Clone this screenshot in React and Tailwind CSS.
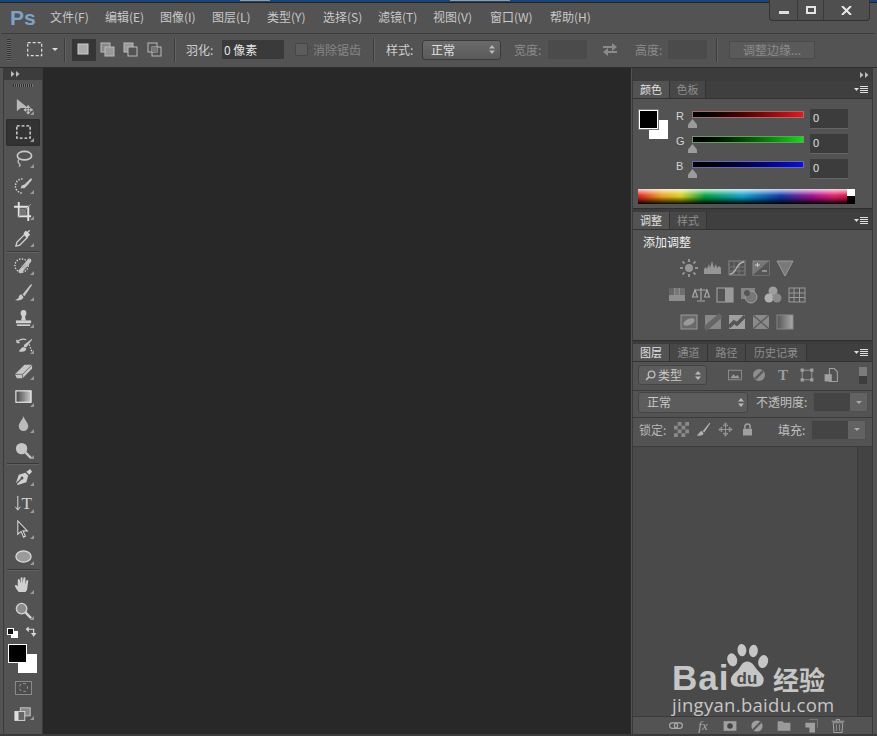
const Ico = ({ s = 20, children, vb = 20 }) => (
  <svg width={s} height={s} viewBox={`0 0 ${vb} ${vb}`} fill="none" stroke="none">{children}</svg>
);

const tools = [
  <><path d="M3 2l0 13 4-3.500 8 0z" fill="#b9b9b9" /><path d="M15 9v9M10.500 13.500h9M15 9l-1.500 2h3zM15 18l-1.500-2h3zM10.500 13.500l2-1.500v3zM19.500 13.500l-2-1.500v3z" stroke="#c4c4c4" strokeWidth="1" /></>,
  <rect x="3" y="3" width="14" height="13" stroke="#e4e4e4" strokeWidth="1.400" strokeDasharray="3 2" />,
  <><ellipse cx="11" cy="7" rx="7.500" ry="4.500" stroke="#c8c8c8" strokeWidth="1.800" /><path d="M5 11c-2 3 0 4 1 5 1 1 0 2-1 2" stroke="#bbb" strokeWidth="1.400" /></>,
  <><path d="M9 3a7 7 0 1 0 0 15" stroke="#ddd" strokeWidth="1.500" strokeDasharray="1.500 1.500" /><path d="M18 2l-7 7-3 1-1 3 4 0 3-3 5-6z" fill="#c8c8c8" /></>,
  <><path d="M5 0v15h13M0 5h15v15" stroke="#e2e2e2" strokeWidth="2" /><path d="M4 16L18 2" stroke="#999" strokeWidth="1" /><rect x="6" y="7" width="7" height="7" fill="#777" /></>,
  <><path d="M2 19l1-4 8-8 3 3-8 8z" stroke="#d0d0d0" strokeWidth="1.400" /><path d="M10 6l4 4 2-2 1-1-2-2 2-2-1-1-2 2-2-1z" fill="#d8d8d8" /></>,
  <><circle cx="8" cy="10" r="7" stroke="#ddd" strokeWidth="1.300" strokeDasharray="1.500 1.500" /><path d="M5 15L15 3c2-1 4 1 3 3L8 18c-2 1-4-1-3-3z" fill="#c4c4c4" /><path d="M9 12l1-1M11 10l1-1M11 13l1-1M8 10l1-1" stroke="#777" strokeWidth="1" /></>,
  <><path d="M18 1L9 12l2 2L19 2z" fill="#c8c8c8" /><path d="M8 12c-3 0-3 3-3 3 0 1-2 2-4 3 3 1 8 0 9-3z" fill="#c8c8c8" /></>,
  <><ellipse cx="10" cy="4.500" rx="3" ry="3.500" fill="#d0d0d0" /><path d="M8.500 7h3l1 5h-5z" fill="#d0d0d0" /><path d="M2 12h16v3H2z" fill="#d0d0d0" /><path d="M3 17h14" stroke="#e2e2e2" strokeWidth="1.500" /></>,
  <><path d="M19 4L11 10l-1 3 3 0 6-8z" fill="#c8c8c8" /><path d="M10 13c-3 0-3 3-5 4 3 1 8 1 8-3z" fill="#c8c8c8" /><path d="M3 8c3-4 7-4 10-3M3 8l0-3M3 8l3 0" stroke="#c8c8c8" strokeWidth="1.300" /><path d="M16 10l3 8" stroke="#ddd" strokeWidth="1.300" strokeDasharray="1.500 1.500" /></>,
  <><path d="M1 13L11 3h8v4L9 17H3z" fill="#c4c4c4" /><path d="M1 13h8v4M9 13L19 3" stroke="#6e6e6e" strokeWidth="1" /></>,
  <><defs><linearGradient id="gr"><stop offset="0" stopColor="#444" /><stop offset="1" stopColor="#ccc" /></linearGradient></defs><rect x="2" y="3" width="16" height="12" fill="url(#gr)" stroke="#eee" strokeWidth="1.200" /></>,
  <path d="M10 2c1 4 5 7 5 11a5 5 0 0 1-10 0c0-4 4-7 5-11z" fill="#bbb" />,
  <><circle cx="8" cy="8" r="6" fill="#c6c6c6" /><path d="M12 12l6 6" stroke="#c6c6c6" strokeWidth="2.500" /></>,
  <><path d="M17 1l2 3-3 3-3-3zM12 5l3 3-2 7-9 3-1-1 5-5a1.500 1.500 0 1 0-1-1l-5 5 3-9z" fill="#d0d0d0" /></>,
  <><path d="M4 2v14M1.500 13.500L4 17l2.500-3.500" stroke="#ddd" strokeWidth="1" /><text x="8" y="16" fontFamily="Liberation Serif" fontSize="18" fill="#d4d4d4">T</text></>,
  <path d="M4 1v14l3.500-3 2.500 6 2-1-2.500-5.500H14z" fill="#444" stroke="#d0d0d0" strokeWidth="1.200" />,
  <ellipse cx="10" cy="10" rx="8" ry="6" fill="#9b9b9b" stroke="#ddd" strokeWidth="1.300" />,
  <path d="M5 18c-2-3-4-5-4-7 1-1 2 0 3 1V5c0-1 2-1 2 0l1 4V3c0-1 2-1 2 0l0 6 1-6c0-1 2-1 2 0l0 7 1-4c0-1 2-1 2 0l-1 8c0 2-1 3-2 4z" fill="#d0d0d0" />,
  <><circle cx="8" cy="8" r="5.500" fill="#8a8a8a" stroke="#d0d0d0" strokeWidth="1.500" /><path d="M12 12l6 6" stroke="#d6d6d6" strokeWidth="2.500" /></>,
];

function Corner() {
  return <span className="absolute right-[6px] bottom-[4px] w-0 h-0 border-l-[4px] border-l-transparent border-b-[4px] border-b-[#9a9a9a]" />;
}

function Tool({ icon, active, corner = true }) {
  return (
    <div className={`relative h-[26.300px] w-[34px] flex items-center justify-center rounded-[2px] ${active ? "bg-[#333] shadow-[inset_0_0_2px_#222]" : ""}`}>
      <Ico s={19}>{icon}</Ico>
      {corner && <Corner />}
    </div>
  );
}

const Sep = () => <div className="h-[1px] w-[32px] bg-[#3a3a3a] border-b border-[#626262] box-content" />;

function Toolbar() {
  return (
    <div className="w-[40px] ml-[3px] border-x border-[#3a3a3a] bg-[#535353] flex flex-col items-center shrink-0">
      <div className="w-full h-[12px] bg-[#3c3c3c] flex items-center pl-[7px] text-[#bbb]">
        <Chev />
      </div>
      <div className="mt-[4px] w-[20px] h-[3px] bg-[repeating-linear-gradient(90deg,#2c2c2c_0_1px,#777_1px_2px)]" />
      <div className="mt-[6px] flex flex-col items-center">
        {tools.slice(0, 6).map((t, i) => <Tool key={i} icon={t} active={i === 1} />)}
        <div className="h-[2px]"><Sep /></div>
        {tools.slice(6, 14).map((t, i) => <Tool key={i} icon={t} />)}
        <div className="h-[1px]"><Sep /></div>
        {tools.slice(14, 18).map((t, i) => <Tool key={i} icon={t} />)}
        <div className="h-[2px]"><Sep /></div>
        {tools.slice(18, 20).map((t, i) => <Tool key={i} icon={t} />)}
      </div>
      <div className="w-[34px] flex items-center justify-between px-[1px] mt-[3px] h-[12px]">
        <div className="relative w-[11px] h-[10px]">
          <span className="absolute right-0 bottom-0 w-[7px] h-[7px] bg-white" />
          <span className="absolute left-0 top-0 w-[7px] h-[7px] bg-[#111] border border-white" />
        </div>
        <span className="mr-[2px]"><Ico s={11}><path d="M4 4h10v8M1 4l3-3v6zM14 16l-3-4h6z" stroke="#ddd" strokeWidth="2" /></Ico></span>
      </div>
      <div className="relative w-[34px] h-[32px] mt-[4px]">
        <span className="absolute left-[12px] top-[11px] w-[19px] h-[19px] bg-white" />
        <span className="absolute left-[2px] top-[1px] w-[19px] h-[19px] bg-black border border-white" />
      </div>
      <div className="mt-[6px] w-[17px] h-[14px] border border-[#8a8a8a] bg-[#4d4d4d] flex items-center justify-center">
        <span className="w-[9px] h-[9px] rounded-full border border-dashed border-[#999]" />
      </div>
      <div className="relative mt-[11px] w-[34px] h-[18px] flex items-center justify-center">
        <Ico s={18}><rect x="7" y="2" width="11" height="9" fill="#888" stroke="#ccc" /><rect x="1" y="6" width="11" height="10" fill="#666" stroke="#ddd" /><rect x="1" y="6" width="4" height="10" fill="#ddd" /></Ico>
        <Corner />
      </div>
    </div>
  );
}

const Chev = () => (
  <svg width="9" height="6" viewBox="0 0 9 6"><path d="M0 0l3.500 3L0 6zM5 0l3.500 3L5 6z" fill="currentColor" /></svg>
);

const Menu = () => (
  <svg width="15" height="7" viewBox="0 0 15 7" className="shrink-0"><path d="M0 2h5L2.500 5z" fill="#ddd" /><path d="M6 .5h8M6 2.500h8M6 4.500h8M6 6.500h8" stroke="#ddd" strokeWidth="1" /></svg>
);

function Tabs({ items }) {
  return (
    <div className="h-[17px] bg-[#3f3f3f] flex items-stretch border-b border-[#333] box-content">
      {items.map(([t, w], i) => (
        <div
          key={t}
          style={{ width: w }}
          className={`text-[11px] leading-[17px] text-center border-r border-[#333] ${i === 0 ? "bg-[#535353] text-[#e0e0e0]" : "bg-[#474747] text-[#8e8e8e]"}`}
        >
          {t}
        </div>
      ))}
      <div className="ml-auto mr-[3px] self-center flex"><Menu /></div>
    </div>
  );
}

function Slider({ label, gradient, border }) {
  return (
    <div className="flex items-center h-[25px]">
      <span className="w-[16px] ml-[6px] text-[11px] text-[#d4d4d4] font-['Liberation_Sans',sans-serif] -mt-[5px]">{label}</span>
      <div className="relative w-[112px] mr-[6px] -mt-[8px]">
        <div className={`h-[7px] border ${gradient} ${border}`} />
        <span className="absolute left-[-4px] top-[8px] w-[9px] h-[9px] bg-[#9b9b9b] [clip-path:polygon(50%_0,100%_60%,100%_100%,0_100%,0_60%)]" />
      </div>
      <div className="w-[38px] h-[20px] bg-[#3c3c3c] border-b border-[#666] text-[11px] leading-[19px] pl-[3px] text-[#e0e0e0] font-['Liberation_Sans',sans-serif]">0</div>
    </div>
  );
}

function ColorPanel() {
  return (
    <div className="h-[110px] bg-[#535353] border-b border-[#2e2e2e] flex flex-col">
      <div className="flex pt-[11px] pl-[5px] h-[90px]">
        <div className="relative w-[32px] h-[32px] shrink-0">
          <span className="absolute left-[11px] top-[10px] w-[19px] h-[19px] bg-white" />
          <span className="absolute left-[1px] top-0 w-[19px] h-[19px] bg-black border border-white outline outline-[#777]" />
        </div>
        <div className="flex flex-col -mt-[4px] w-[200px]">
          <Slider label="R" gradient="bg-gradient-to-r from-black to-[#e01a20]" border="border-[#a86a6a]" />
          <Slider label="G" gradient="bg-gradient-to-r from-black to-[#18d81c]" border="border-[#6a9a6a]" />
          <Slider label="B" gradient="bg-gradient-to-r from-black to-[#0b12cf]" border="border-[#6a6ab0]" />
        </div>
      </div>
      <div className="relative ml-[5px] w-[217px] h-[15px] overflow-hidden">
        <div className="absolute inset-0 bg-[linear-gradient(90deg,#e02020_0%,#e8a020_11%,#d8d020_20%,#00a040_31%,#10a0c8_48%,#1038a8_66%,#a01090_80%,#e02070_90%,#d01030_100%)]" />
        <div className="absolute inset-0 bg-[linear-gradient(180deg,rgba(255,255,255,.8)_0%,rgba(255,255,255,0)_45%,rgba(0,0,0,0)_50%,rgba(0,0,0,.95)_100%)]" />
        <span className="absolute right-0 top-0 w-[8px] h-[7px] bg-white" />
        <span className="absolute right-0 bottom-0 w-[8px] h-[8px] bg-black" />
      </div>
    </div>
  );
}

const g = "#969696";
const adj = [
  [
    <><circle cx="10" cy="10" r="4" fill={g} /><path d="M10 1v3M10 16v3M1 10h3M16 10h3M3.500 3.500l2 2M14.500 14.500l2 2M3.500 16.500l2-2M14.500 5.500l2-2" stroke="#aaa" strokeWidth="1.500" /></>,
    <path d="M1 16V11l2-2 1 2 2-5 1 4 2-7 2 7 2-4 1 4 2-2 2 2v6z" fill={g} />,
    <><rect x="2" y="3" width="16" height="14" stroke="#888" /><path d="M2 9h16M2 13h16M7 3v14M12 3v14" stroke="#777" /><path d="M3 16c7 0 6-12 14-12" stroke="#bbb" strokeWidth="1.300" /></>,
    <><rect x="2" y="3" width="16" height="14" fill="#777" stroke="#888" /><path d="M2 17L18 3v14z" fill="#555" /><path d="M4 7h5M6.500 5v4M11 13h5" stroke="#ccc" /></>,
    <path d="M2 3h16l-8 15z" fill="#7a7a7a" stroke="#999" />,
  ],
  [
    <><rect x="2" y="3" width="16" height="13" fill="#8e8e8e" /><rect x="2" y="3" width="5" height="7" fill="#666" /><rect x="8" y="3" width="4" height="7" fill="#777" /><rect x="13" y="3" width="5" height="7" fill="#6e6e6e" /></>,
    <path d="M10 3v12M4 5h12M4 5l-2.500 7h5zM16 5l-2.500 7h5zM6 16h8" stroke="#a8a8a8" strokeWidth="1.200" />,
    <><rect x="2" y="3" width="16" height="14" stroke="#999" strokeWidth="1.200" /><rect x="10" y="3" width="8" height="14" fill="#9a9a9a" /></>,
    <><rect x="2" y="3" width="14" height="11" fill="#858585" /><circle cx="12" cy="12" r="6" fill="#777" stroke="#a0a0a0" /><circle cx="8" cy="8" r="3" fill="#555" /></>,
    <><circle cx="10" cy="6" r="4.500" fill="#9e9e9e" /><circle cx="6" cy="13" r="4.500" fill="#b0b0b0" /><circle cx="14" cy="13" r="4.500" fill="#8a8a8a" /></>,
    <><rect x="2" y="3" width="16" height="14" fill="#555" stroke="#999" /><path d="M2 8h16M2 12.500h16M7 3v14M12.500 3v14" stroke="#999" /></>,
  ],
  [
    <><rect x="2" y="3" width="16" height="14" fill="#6a6a6a" stroke="#999" /><ellipse cx="10" cy="10" rx="6" ry="3" transform="rotate(-25 10 10)" fill="#9a9a9a" /></>,
    <><rect x="2" y="3" width="16" height="14" fill="#888" /><path d="M2 17L18 3" stroke="#666" strokeWidth="5" /></>,
    <><rect x="2" y="3" width="16" height="14" fill="#a0a0a0" /><path d="M2 15l5-5 3 2 8-8" stroke="#555" strokeWidth="3.500" /></>,
    <><rect x="2" y="3" width="16" height="14" fill="#8a8a8a" /><path d="M2 3l8 7 8-7M2 17l8-7 8 7" stroke="#5c5c5c" strokeWidth="1.500" /></>,
    <><defs><linearGradient id="gm"><stop offset="0" stopColor="#555" /><stop offset="1" stopColor="#aaa" /></linearGradient></defs><rect x="2" y="3" width="16" height="14" fill="url(#gm)" stroke="#888" /></>,
  ],
];

function AdjPanel() {
  return (
    <div className="h-[111px] bg-[#535353] border-b border-[#2e2e2e] flex flex-col">
      <div className="h-[24px] pl-[10px] text-[12px] leading-[24px] text-[#f0f0f0]">添加调整</div>
      <div className="flex flex-col items-center gap-[7px] pr-[32px] pt-[4px]">
        {adj.map((r, i) => (
          <div key={i} className="flex gap-[4px] h-[20px]">
            {r.map((ic, j) => <Ico key={j} s={20}>{ic}</Ico>)}
          </div>
        ))}
      </div>
    </div>
  );
}

const UpDown = () => (
  <svg width="6" height="9" viewBox="0 0 6 9" className="shrink-0"><path d="M3 0l3 3.500H0zM3 9L0 5.500h6z" fill="#b8b8b8" /></svg>
);

function Dropper() {
  return (
    <div className="w-[55px] h-[20px] flex bg-[#464646] border border-[#505050]">
      <div className="w-[36px] bg-[#444]" />
      <div className="flex-1 bg-[#626262] flex items-center justify-center">
        <span className="w-0 h-0 border-x-[3px] border-x-transparent border-t-[3px] border-t-[#aaa]" />
      </div>
    </div>
  );
}

function LayersPanel() {
  return (
    <div className="flex-1 bg-[#535353] flex flex-col min-h-0">
      <div className="h-[26px] flex items-center pl-[5px] pb-[2px] border-b border-[#3b3b3b] box-content shrink-0">
        <div className="w-[69px] h-[20px] rounded-[3px] bg-[#5c5c5c] border border-[#444] flex items-center pl-[6px] pr-[5px] text-[12px] text-[#c8c8c8]">
          <Ico s={11}><circle cx="12" cy="8" r="6" stroke="#bbb" strokeWidth="2.500" /><path d="M7 13l-5 5" stroke="#bbb" strokeWidth="3" /></Ico>
          <span className="ml-[2px] leading-none">类型</span>
          <span className="ml-auto"><UpDown /></span>
        </div>
        <div className="flex ml-[20px] gap-[8px]">
          <Ico s={16}><rect x="2" y="4" width="16" height="12" stroke="#999" /><path d="M4 14l4-5 3 3 2-2 3 4z" fill="#999" /></Ico>
          <Ico s={16}><circle cx="10" cy="10" r="7.500" fill="#8e8e8e" /><path d="M5 15L15 5" stroke="#5a5a5a" strokeWidth="3" /></Ico>
          <span className="w-[16px] text-center text-[15px] leading-[16px] font-bold text-[#9c9c9c] font-['Liberation_Serif',serif]">T</span>
          <Ico s={16}><rect x="4" y="4" width="12" height="12" stroke="#a0a0a0" /><path d="M2 2h4v4H2zM14 2h4v4h-4zM2 14h4v4H2zM14 14h4v4h-4z" fill="#a0a0a0" /></Ico>
          <Ico s={16}><path d="M8 2h6l4 4v12H8z" stroke="#a0a0a0" strokeWidth="1.300" /><rect x="2" y="9" width="9" height="9" fill="#a0a0a0" /></Ico>
        </div>
        <div className="ml-auto mr-[5px] w-[8px] h-[17px] flex flex-col">
          <span className="h-[9px] bg-[#7c7c7c]" />
          <span className="flex-1 bg-[#3e3e3e]" />
        </div>
      </div>
      <div className="h-[22px] flex items-center pl-[5px] pb-[4px] border-b border-[#3b3b3b] box-content shrink-0">
        <div className="w-[110px] h-[21px] rounded-[3px] bg-[#5c5c5c] border border-[#444] flex items-center pl-[8px] pr-[3px] text-[12px] text-[#c8c8c8]">
          正常<span className="ml-auto"><UpDown /></span>
        </div>
        <span className="ml-[8px] w-[57px] text-[12px] text-[#c0c0c0] whitespace-nowrap">不透明度:</span>
        <Dropper />
      </div>
      <div className="h-[23px] flex items-center pl-[6px] pb-[5px] border-b border-[#3b3b3b] box-content shrink-0">
        <span className="w-[35px] text-[12px] text-[#b8b8b8] whitespace-nowrap">锁定:</span>
        <div className="flex gap-[7px] items-center">
          <svg width="15" height="15" viewBox="0 0 4 4"><rect width="4" height="4" fill="#8a8a8a" /><path d="M0 0h1v1H0zM2 0h1v1H2zM1 1h1v1H1zM3 1h1v1H3zM0 2h1v1H0zM2 2h1v1H2zM1 3h1v1H1zM3 3h1v1H3z" fill="#555" /></svg>
          <Ico s={15}><path d="M18 1L9 12l2 2L19 2zM8 12c-3 0-3 3-7 6 4 1 9 0 9-3z" fill="#b0b0b0" /></Ico>
          <Ico s={15}><path d="M10 2v16M2 10h16M10 1L7 5h6zM10 19l-3-4h6zM1 10l4-3v6zM19 10l-4-3v6z" stroke="#a8a8a8" strokeWidth="1" /></Ico>
          <Ico s={15}><rect x="4" y="9" width="12" height="9" fill="#a0a0a0" /><path d="M6.500 9V6a3.500 3.500 0 0 1 7 0v3" stroke="#a0a0a0" strokeWidth="2" /></Ico>
        </div>
        <span className="ml-[23px] w-[33px] text-[12px] text-[#c0c0c0] whitespace-nowrap">填充:</span>
        <Dropper />
      </div>
      <div className="flex-1 flex min-h-0">
        <div className="flex-1 bg-[#4a4a4a]" />
        <div className="w-[15px] bg-[#434343] border-l border-[#3a3a3a]" />
      </div>
      <div className="h-[18px] bg-[#535353] border-t border-[#3a3a3a] flex items-center pl-[35px] gap-[11px] shrink-0">
        <Ico s={16}><rect x="2" y="6" width="10" height="7" rx="3.500" stroke="#aaa" strokeWidth="1.500" /><rect x="8" y="6" width="10" height="7" rx="3.500" stroke="#aaa" strokeWidth="1.500" /></Ico>
        <span className="w-[16px] text-center text-[13px] leading-none italic text-[#a8a8a8] font-['Liberation_Serif',serif]">fx</span>
        <Ico s={16}><rect x="2" y="4" width="16" height="12" fill="#a0a0a0" /><circle cx="10" cy="10" r="3.500" fill="#444" /></Ico>
        <Ico s={16}><circle cx="10" cy="10" r="7" fill="#9e9e9e" /><path d="M5 15L15 5" stroke="#555" strokeWidth="2.500" /></Ico>
        <Ico s={16}><path d="M2 4h6l2 2h8v10H2z" fill="#9a9a9a" /></Ico>
        <Ico s={16}><path d="M3 6h12v12h-7V12H3z" fill="#a0a0a0" /><path d="M8 2h10v10" stroke="#888" /></Ico>
        <Ico s={16}><path d="M4 6l1 12h10l1-12zM2 4h16M8 4V2h4v2" stroke="#a0a0a0" strokeWidth="1.300" /><path d="M8 8v8M12 8v8" stroke="#a0a0a0" /></Ico>
      </div>
    </div>
  );
}

function RightPanels() {
  return (
    <div className="w-[241px] ml-[1px] flex flex-col shrink-0 border-x border-[#3a3a3a]">
      <div className="h-[13px] bg-[#3c3c3c] flex items-center justify-end pr-[3px] text-[#bbb] shrink-0"><Chev /></div>
      <Tabs items={[["颜色", 37], ["色板", 36]]} />
      <ColorPanel />
      <div className="h-[3px] bg-[#3c3c3c]" />
      <Tabs items={[["调整", 37], ["样式", 37]]} />
      <AdjPanel />
      <div className="h-[3px] bg-[#3c3c3c]" />
      <Tabs items={[["图层", 37], ["通道", 38], ["路径", 38], ["历史记录", 61]]} />
      <LayersPanel />
    </div>
  );
}

function Watermark() {
  return (
    <div className="absolute left-[672px] top-[641px] w-[160px] h-[78px] text-[#c6c6c6] pointer-events-none">
      <div className="absolute left-0 top-[22px] text-[35px] leading-[30px] font-bold tracking-[1px] font-['Liberation_Sans',sans-serif]">Bai</div>
      <svg className="absolute left-[54px] top-0" width="46" height="50" viewBox="0 0 52 50" fill="#c6c6c6">
        <ellipse cx="7" cy="18" rx="5.500" ry="7.500" transform="rotate(-15 7 18)" />
        <ellipse cx="18" cy="7" rx="5" ry="7" transform="rotate(-5 18 7)" />
        <ellipse cx="31" cy="8" rx="5" ry="7" transform="rotate(5 31 8)" />
        <ellipse cx="42" cy="20" rx="5.500" ry="7.500" transform="rotate(15 42 20)" />
        <path d="M24 20c6 0 8 6 12 10 5 5 8 8 6 14-2 5-7 5-18 4-10 1-16 1-18-4-2-6 2-10 7-14 4-4 5-10 11-10z" />
      </svg>
      <div className="absolute left-[57px] top-[28px] w-[36px] text-center text-[17px] leading-[20px] font-bold text-[#4c4c4c] font-['Liberation_Sans',sans-serif]">du</div>
      <div className="absolute left-[101px] top-[25px] text-[26px] leading-[26px] font-bold whitespace-nowrap">经验</div>
      <div className="absolute left-0 top-[54px] text-[18.500px] leading-[20px] tracking-[0.300px] whitespace-nowrap font-['Open_Sans',sans-serif]">jingyan.baidu.com</div>
    </div>
  );
}

const menu = [["文件(F)", 55], ["编辑(E)", 55], ["图像(I)", 52], ["图层(L)", 55], ["类型(Y)", 56], ["选择(S)", 55], ["滤镜(T)", 55], ["视图(V)", 57], ["窗口(W)", 60], ["帮助(H)", 60]];

const ShapeMode = ({ children, active }) => (
  <div className={`w-[23.500px] h-[22px] flex items-center justify-center ${active ? "bg-[#363636]" : ""}`}>
    <svg width="15" height="15" viewBox="0 0 15 15" fill="none">{children}</svg>
  </div>
);
const Div = () => <div className="w-[1px] h-[24px] bg-[#3c3c3c] border-r border-[#626262] box-content" />;

export default function App() {
  return (
    <div className="relative w-[877px] h-[736px] overflow-hidden bg-[#535353] flex flex-col font-['Noto_Sans_CJK_SC',sans-serif]">
      <div className="h-[3px] bg-[#1b4478] border-b border-[#222] shrink-0 flex">
        <span className="ml-[240px] w-[30px] h-[1px] bg-[#999]" />
        <span className="ml-[180px] w-[60px] h-[1px] bg-[#999]" />
      </div>
      <div className="h-[30px] flex items-start shrink-0">
        <span className="ml-[10px] mt-[1px] w-[40px] text-[21px] leading-[28px] font-bold text-[#7ea2c6] font-['Liberation_Sans',sans-serif]">Ps</span>
        <div className="flex pt-[5px] text-[12px] leading-[18px] text-[#c8c8c8]">
          {menu.map(([t, w]) => <span key={t} style={{ width: w }} className="whitespace-nowrap">{t}</span>)}
        </div>
        <div className="absolute left-[769px] top-0 w-[101px] h-[21px] flex border border-t-0 border-[#333] rounded-b-[4px] bg-[#4f4f4f]">
          <div className="w-[28px] border-r border-[#3a3a3a] flex items-center justify-center"><span className="mt-[5px] w-[10px] h-[3px] bg-[#ddd]" /></div>
          <div className="w-[26px] border-r border-[#3a3a3a] flex items-center justify-center"><span className="w-[10px] h-[8px] border-2 border-[#e4e4e4]" /></div>
          <div className="flex-1 flex items-center justify-center">
            <svg width="11" height="9" viewBox="0 0 11 9"><path d="M1 0l9 9M10 0L1 9" stroke="#e8e8e8" strokeWidth="2" /></svg>
          </div>
        </div>
      </div>
      <div className="h-[34px] mx-[2px] pb-[2px] border-t border-[#3c3c3c] flex items-center shrink-0 text-[12px]">
        <div className="ml-[5px] w-[4px] h-[22px] bg-[repeating-linear-gradient(180deg,#333_0_1px,#666_1px_2px)]" />
        <svg className="ml-[16px]" width="16" height="15" viewBox="0 0 16 15" fill="none"><rect x=".7" y=".7" width="14" height="13" stroke="#ddd" strokeWidth="1.200" strokeDasharray="3 2" /></svg>
        <span className="ml-[9px] mr-[6px] w-0 h-0 border-x-[3px] border-x-transparent border-t-[3px] border-t-[#ddd]" />
        <Div />
        <div className="ml-[6px] flex">
          <ShapeMode active><rect x="2" y="2" width="10" height="10" fill="#aaa" stroke="#ccc" /></ShapeMode>
          <ShapeMode><rect x="1" y="1" width="9" height="9" fill="#888" stroke="#bbb" /><rect x="5" y="5" width="9" height="9" fill="#999" stroke="#bbb" /></ShapeMode>
          <ShapeMode><rect x="1" y="1" width="9" height="9" fill="#999" stroke="#bbb" /><rect x="5" y="5" width="9" height="9" fill="#535353" stroke="#bbb" /></ShapeMode>
          <ShapeMode><rect x="1" y="1" width="9" height="9" stroke="#bbb" /><rect x="5" y="5" width="9" height="9" stroke="#bbb" /><rect x="5" y="5" width="5" height="5" fill="#777" /></ShapeMode>
        </div>
        <div className="ml-[8px]"><Div /></div>
        <span className="ml-[10px] w-[36px] text-[#cfcfcf] whitespace-nowrap">羽化:</span>
        <div className="w-[62px] h-[19px] bg-[#3a3a3a] text-[#e4e4e4] pl-[2px] leading-[19px] whitespace-nowrap">0 像素</div>
        <span className="ml-[11px] w-[13px] h-[13px] rounded-[2px] bg-[#5c5c5c] border border-[#454545]" />
        <span className="ml-[5px] w-[53px] text-[#868686] whitespace-nowrap">消除锯齿</span>
        <div className="ml-[7px]"><Div /></div>
        <span className="ml-[11px] w-[36px] text-[#cfcfcf] whitespace-nowrap">样式:</span>
        <div className="w-[79px] h-[20px] rounded-[3px] border border-[#3a3a3a] bg-gradient-to-b from-[#6a6a6a] to-[#5a5a5a] flex items-center pl-[8px] pr-[5px] text-[#e0e0e0]">
          正常<span className="ml-auto"><UpDown /></span>
        </div>
        <span className="ml-[13px] w-[34px] text-[#8a8a8a] whitespace-nowrap">宽度:</span>
        <div className="w-[39px] h-[19px] bg-[#4b4b4b]" />
        <svg className="ml-[15px]" width="16" height="13" viewBox="0 0 16 13" fill="none"><path d="M1 4h11M15 9H4" stroke="#8a8a8a" strokeWidth="2" /><path d="M10 0l5 4-5 4zM6 5l-5 4 5 4z" fill="#8a8a8a" /></svg>
        <span className="ml-[17px] w-[33px] text-[#8a8a8a] whitespace-nowrap">高度:</span>
        <div className="w-[39px] h-[19px] bg-[#4b4b4b]" />
        <div className="ml-[9px]"><Div /></div>
        <div className="ml-[11px] w-[86px] h-[18px] rounded-[2px] bg-[#5a5a5a] border border-[#4a4a4a] text-center leading-[16px] text-[#8a8a8a]">调整边缘...</div>
      </div>
      <div className="flex-1 flex min-h-0 border-t border-[#2e2e2e]">
        <Toolbar />
        <div className="w-[588px] bg-[#282828] shrink-0" />
        <RightPanels />
      </div>
      <div className="h-[2px] bg-[#3a3a3a] shrink-0" />
      <Watermark />
    </div>
  );
}
